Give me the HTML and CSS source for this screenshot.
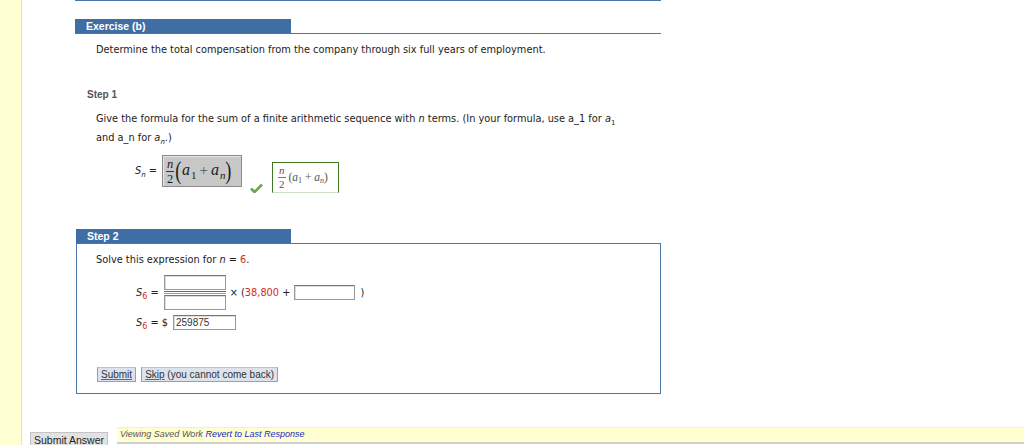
FILE: index.html
```html
<!DOCTYPE html>
<html>
<head>
<meta charset="utf-8">
<link rel="stylesheet" href="styles.css">
</head>
<body>
<div class="page">
  <div class="strip"></div>
  <div class="main">
    <div class="content">
      <div class="topline"></div>
      <div class="sec-head ex-head"><span class="tab">Exercise (b)</span></div>
      <p class="prompt">Determine the total compensation from the company through six full years of employment.</p>
      <div class="step-label">Step 1</div>
      <p class="step-text">Give the formula for the sum of a finite arithmetic sequence with <i>n</i> terms. (In your formula, use a_1 for <i>a</i><sub>1</sub><br>and a_n for <i>a<sub>n</sub></i>.)</p>
      <div class="formula-row">
        <span class="lhs"><i>S<sub>n</sub></i> =</span>
        <span class="gray-box">
          <span class="frac"><span class="num"><i>n</i></span><span class="den">2</span></span>
          <span class="paren">(</span><i class="va">a</i><span class="sub1">1</span><span class="plus">+</span><i class="va">a</i><i class="subn">n</i><span class="paren">)</span>
        </span>
        <svg class="check" width="13" height="10" viewBox="0 0 13 10"><path d="M1 5.5 L4.5 9 L12 1.5" fill="none" stroke="#6aa84f" stroke-width="2.6" stroke-linejoin="round"/></svg>
        <span class="green-box">
          <span class="frac small"><span class="num"><i>n</i></span><span class="den">2</span></span>
          <span class="mj">(<i>a</i><span class="ms">1</span> + <i>a</i><i class="ms">n</i>)</span>
        </span>
      </div>
      <div class="sec-head step2-head"><span class="tab">Step 2</span></div>
      <div class="step-box">
        <p class="solve">Solve this expression for <i>n</i> = <span class="red">6</span>.</p>
        <div class="calc-row">
          <span class="lhs2"><i>S</i><sub class="red">6</sub> =</span>
          <span class="frac-in">
            <span class="inp fin"></span>
            <span class="fline"></span>
            <span class="inp fin"></span>
          </span>
          <span class="times">× (<span class="red">38,800</span> +</span>
          <span class="inp wide"></span>
          <span class="close">)</span>
        </div>
        <div class="calc-row2">
          <span class="lhs2"><i>S</i><sub class="red">6</sub> = $</span>
          <span class="inp ans">259875</span>
        </div>
        <div class="buttons">
          <span class="btn"><u>Submit</u></span>
          <span class="btn"><u>Skip</u> (you cannot come back)</span>
        </div>
      </div>
    </div>
    <div class="bottom">
      <span class="submit-answer">Submit Answer</span>
      <div class="saved"><span class="sv">Viewing Saved Work</span> <span class="revert">Revert to Last Response</span></div>
    </div>
  </div>
</div>
</body>
</html>
```
FILE: styles.css
```css
* { box-sizing: border-box; }
html, body { margin: 0; padding: 0; background: #fff; }
body { font-family: "DejaVu Sans", Verdana, sans-serif; font-size: 9.8px; color: #222; overflow: hidden; }
.page { display: flex; width: 1024px; height: 445px; }
.strip { width: 22px; flex: none; background: #ffffd4; border-right: 1px solid #e4e2bf; height: 445px; }
.main { flex: 1; display: flex; flex-direction: column; }
.content { margin-left: 53px; width: 586px; }
.topline { height: 1px; background: #4a78ad; }
.sec-head { display: flex; border-bottom: 1px solid #4a78ad; }
.ex-head { margin-top: 18px; }
.tab { width: 216px; height: 14px; background: #3e6ea4; color: #fff; font-family: "Liberation Sans", Arial, sans-serif; font-weight: bold; font-size: 10.5px; line-height: 14px; padding-left: 11px; }
.prompt { margin: 9px 0 0 21px; line-height: 14px; }
.step-label { margin: 31px 0 0 12px; line-height: 14px; font-family: "Liberation Sans", Arial, sans-serif; font-weight: bold; font-size: 10px; color: #555; }
.step-text { margin: 7px 0 0 21px; line-height: 19px; }
.step-text sub, .solve sub { font-size: 7px; vertical-align: -3px; line-height: 0; }
.formula-row { display: flex; align-items: flex-start; margin: 8px 0 0 60px; height: 38px; }
.lhs { margin-top: 10px; width: 27px; font-size: 9.8px; white-space: nowrap; }
.lhs sub { font-size: 7px; vertical-align: -3px; line-height: 0; }
.gray-box { display: flex; align-items: center; width: 80px; height: 32px; background: #c8c8c8; border: 1px solid #8a8a8a; box-shadow: inset 1px 1px 0 #e6e6e6; padding-left: 3px; font-family: "Liberation Serif", "Times New Roman", serif; color: #1a1a1a; }
.frac { display: inline-flex; flex-direction: column; align-items: center; font-family: "Liberation Serif", serif; font-size: 12.5px; line-height: 12px; }
.gray-box .frac { margin-right: 1px; }
.frac .num { border-bottom: 1px solid #333; padding: 0 1px 1px; }
.frac .den { padding-top: 1px; }
.paren { font-size: 26px; line-height: 28px; height: 28px; display: inline-block; transform: scaleX(0.7); margin: 0 -1px; }
.va { font-size: 16px; line-height: 16px; margin-top: -3px; }
.sub1 { font-size: 11px; align-self: flex-end; margin-bottom: 5px; margin-left: 1px; }
.subn { font-size: 11px; align-self: flex-end; margin-bottom: 5px; margin-left: 1px; }
.plus { font-size: 15px; color: #555; margin: -2px 3px 0; }
.check { margin: 28px 0 0 8px; flex: none; }
.green-box { display: flex; align-items: center; width: 67px; height: 31px; margin: 7px 0 0 9px; border: 1px solid #3d7a1f; border-bottom-color: #cfe0c5; padding-left: 5px; color: #555; font-family: "Liberation Serif", serif; }
.frac.small { font-size: 11px; line-height: 11px; color: #555; }
.frac.small .num { border-bottom-color: #777; }
.mj { font-size: 11.5px; margin-left: 3px; white-space: nowrap; }
.mj .ms { font-size: 8px; vertical-align: -2px; }
.step2-head { margin-top: 36px; margin-left: 1px; }
.step2-head .tab { width: 215px; }
.step-box { margin-left: 1px; height: 150px; border: 1px solid #4a78ad; border-top: none; padding: 9px 0 0 19px; }
.solve { margin: 0; line-height: 14px; }
.red { color: #d42a20; }
.calc-row { display: flex; align-items: center; margin: 8px 0 0 40px; height: 34px; }
.lhs2 { white-space: nowrap; margin-right: 5px; }
.lhs2 sub { font-size: 8px; vertical-align: -3px; line-height: 0; }
.frac-in { display: flex; flex-direction: column; width: 62px; }
.inp { display: inline-block; border: 1px solid #999; border-top-color: #777; background: #fff; box-shadow: inset 1px 1px 0 #ddd; }
.fin { height: 15px; }
.fline { height: 3px; border-top: 1px solid #666; border-bottom: 1px solid #999; margin: 1px 0; }
.times { margin-left: 4px; white-space: nowrap; }
.wide { width: 61px; height: 15px; margin-left: 4px; }
.close { margin-left: 5px; }
.calc-row2 { display: flex; align-items: center; margin: 5px 0 0 40px; height: 16px; }
.ans { width: 63px; height: 15px; font-family: "Liberation Sans", Arial, sans-serif; font-size: 10px; line-height: 13px; padding-left: 2px; color: #333; }
.buttons { display: flex; gap: 5px; margin: 37px 0 0 1px; }
.btn { height: 15px; line-height: 13px; padding: 0 3px; background: #dce3ec; border: 1px solid #8ea2bf; border-top-color: #b4c2d6; font-family: "Liberation Sans", Arial, sans-serif; font-size: 10px; color: #333; }
.btn u { text-decoration-color: #666; }
.bottom { display: flex; align-items: flex-start; margin-top: 33px; }
.submit-answer { margin: 5px 0 0 8px; height: 17px; width: 78px; background: #e2e2e2; border: 1px solid #c4c4c4; font-family: "Liberation Sans", Arial, sans-serif; font-size: 10.5px; line-height: 15px; text-align: center; color: #222; }
.saved { flex: 1; margin-left: 9px; height: 17px; background: #ffffd2; border-top: 1px solid #eeeede; border-bottom: 2px solid #cfcfcf; font-family: "Liberation Sans", Arial, sans-serif; font-style: italic; font-size: 9px; line-height: 13px; padding-left: 3px; }
.sv { color: #555; }
.revert { color: #1526c8; }
```
